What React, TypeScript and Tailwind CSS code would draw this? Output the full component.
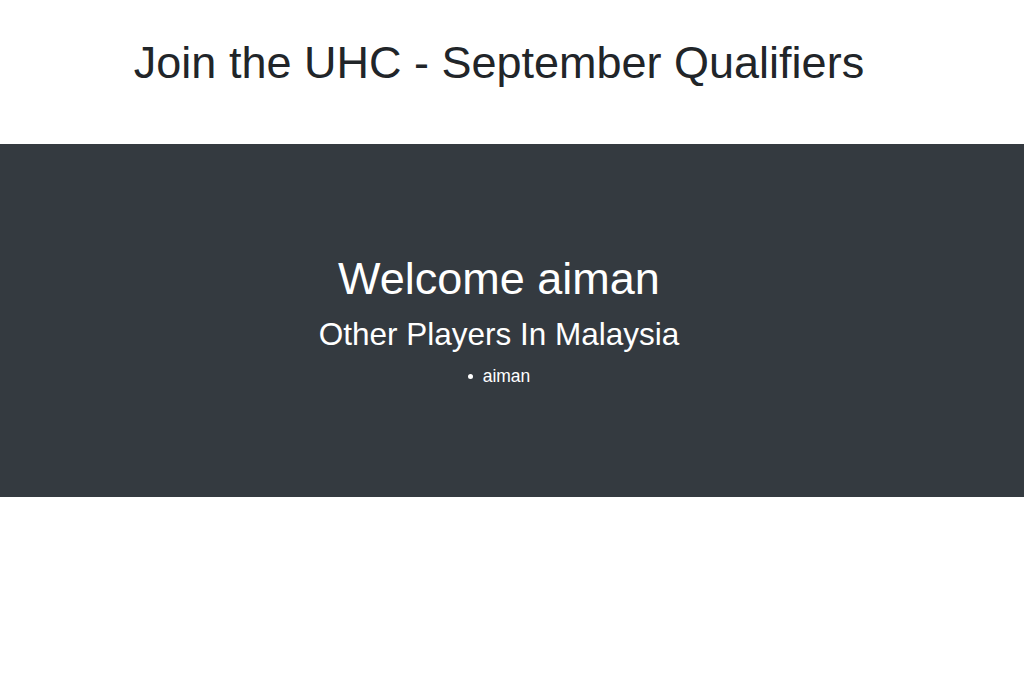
export default function App() {
  return (
    <div className="min-h-[685px] bg-white font-['Liberation_Sans',Arial,sans-serif]">
      <div className="pt-[36px] pb-[54px] pr-[26px] text-center">
        <h1 className="text-[45px] leading-[54px] font-normal text-[#212529]">
          Join the UHC - September Qualifiers
        </h1>
      </div>
      <div className="bg-[#343a40] text-white">
        <div className="pt-[108px] pb-[108px] pr-[26px] text-center">
          <h2 className="text-[45px] leading-[54px] font-normal">Welcome aiman</h2>
          <h3 className="mt-[9px] text-[31.5px] leading-[38px] font-normal">Other Players In Malaysia</h3>
          <ul className="mt-[10px] flex justify-center text-[17.5px] leading-[26px]">
            <li className="flex items-center gap-[10px]">
              <span className="block h-[5px] w-[5px] rounded-full bg-white"></span>
              <span>aiman</span>
            </li>
          </ul>
        </div>
      </div>
    </div>
  );
}
